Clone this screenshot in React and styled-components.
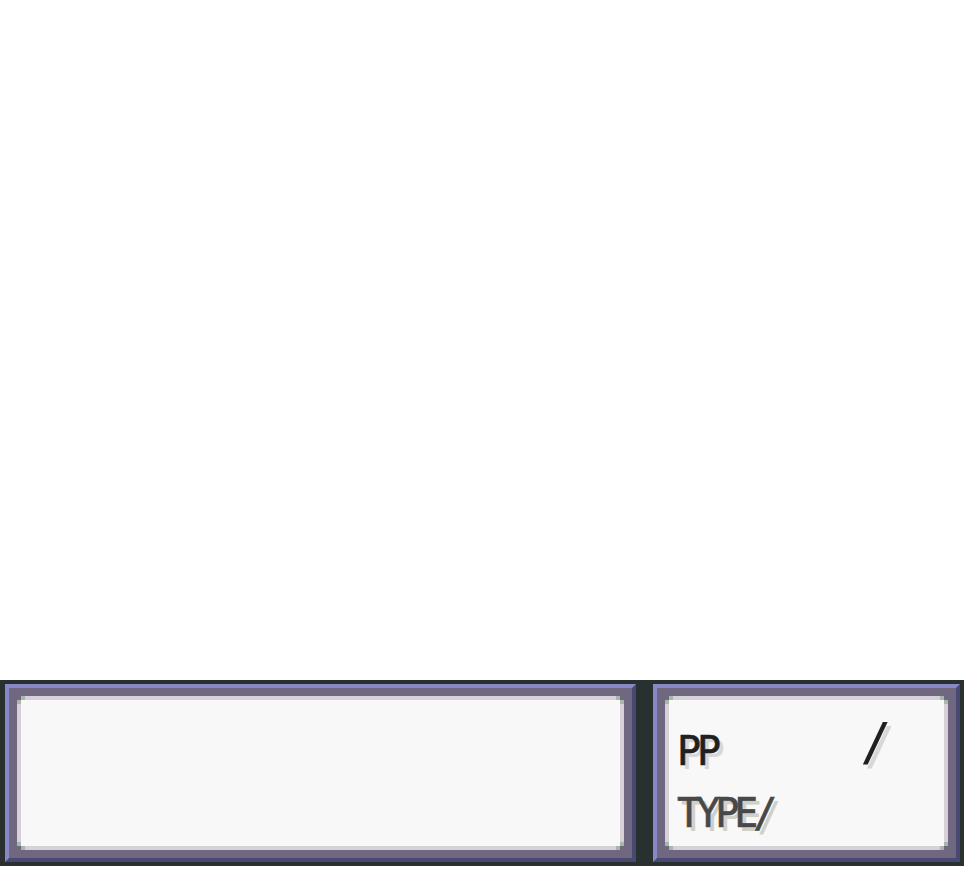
import React from "react";
import styled, { createGlobalStyle } from "styled-components";

const Global = createGlobalStyle`
  html, body { margin: 0; padding: 0; background: #ffffff; }
  body { font-family: "DejaVu Sans Mono", "Liberation Mono", monospace; }
`;

const Screen = styled.div`
  height: 880px;
  display: flex;
  flex-direction: column;
  justify-content: flex-end;
  padding-bottom: 14px;
  box-sizing: border-box;
`;

const Bar = styled.div`
  background: #283030;
  display: flex;
  gap: 17px;
  padding: 4px 4px 4px 5px;
`;

const Panel = styled.div`
  width: ${(p) => p.$w}px;
  height: 178px;
  box-sizing: border-box;
  border-top: 4px solid #8888c8;
  border-left: 4px solid #8888c8;
  border-right: 4px solid #484870;
  border-bottom: 4px solid #484870;
  background: #706880;
  padding: 8px;
  display: flex;
`;

const Rim = styled.div`
  flex: 1;
  padding: 4px;
  display: flex;
  background:
    linear-gradient(#706880 0 0) left top / 4px 4px no-repeat,
    linear-gradient(#706880 0 0) right top / 4px 4px no-repeat,
    linear-gradient(#706880 0 0) left bottom / 4px 4px no-repeat,
    linear-gradient(#706880 0 0) right bottom / 4px 4px no-repeat,
    linear-gradient(#a8b8a8 0 0) left top / 8px 8px no-repeat,
    linear-gradient(#a8b8a8 0 0) right top / 8px 8px no-repeat,
    linear-gradient(#a8b8a8 0 0) left bottom / 8px 8px no-repeat,
    linear-gradient(#a8b8a8 0 0) right bottom / 8px 8px no-repeat,
    #d8d0d8;
`;

const Body = styled.div`
  flex: 1;
  background: #f8f8f8;
  padding: 27px 0 0 8px;
  display: flex;
  flex-direction: column;
  gap: 26px;
`;

const Row = styled.div`
  display: flex;
  align-items: baseline;
  height: 40px;
`;

const Label = styled.span`
  font-family: "DejaVu Sans Mono", monospace;
  font-size: 40px;
  line-height: 40px;
  letter-spacing: ${(p) => (p.$dim ? "-5px" : "-4px")};
  color: ${(p) => (p.$dim ? "#484848" : "#202020")};
  text-shadow: 4px 4px 0 ${(p) => (p.$dim ? "#d0d0c8" : "#d8d8d8")};
  -webkit-text-stroke: 0.6px ${(p) => (p.$dim ? "#484848" : "#202020")};
  white-space: pre;
`;

const Slash = styled.span`
  font-family: "DejaVu Sans Mono", monospace;
  font-size: 52px;
  line-height: 40px;
  color: #202020;
  text-shadow: 4px 4px 0 #d8d8d8;
  margin-left: 143px;
  transform: translateY(-5px);
`;

export default function App() {
  return (
    <>
      <Global />
      <Screen>
        <Bar>
          <Panel $w={631}>
            <Rim>
              <Body />
            </Rim>
          </Panel>
          <Panel $w={307}>
            <Rim>
              <Body>
                <Row>
                  <Label>PP</Label>
                  <Slash>/</Slash>
                </Row>
                <Row>
                  <Label $dim>TYPE/</Label>
                </Row>
              </Body>
            </Rim>
          </Panel>
        </Bar>
      </Screen>
    </>
  );
}
